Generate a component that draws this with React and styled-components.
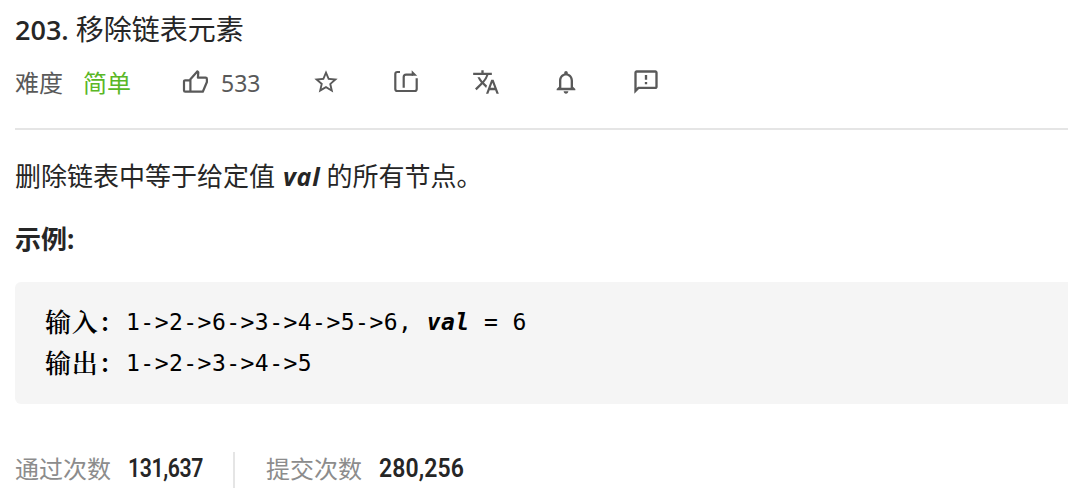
import React from 'react';
import styled, { createGlobalStyle } from 'styled-components';
import { MdStarOutline, MdTranslate, MdNotificationsNone, MdOutlineFeedback } from 'react-icons/md';

const GlobalStyle = createGlobalStyle`
  body {
    margin: 0;
    background: #fff;
    color: #262626;
    font-family: 'Noto Sans', 'Noto Sans CJK SC', sans-serif;
    overflow: hidden;
  }
`;

const Page = styled.main`
  display: flex;
  flex-direction: column;
  height: 504px;
  padding-left: 15px;
  box-sizing: border-box;
  white-space: nowrap;
`;

const Title = styled.h1`
  margin: 9px 0 0;
  height: 40px;
  font-size: 28px;
  line-height: 40px;
  font-weight: 400;
`;

const TitleNumber = styled.span`
  font-family: 'Open Sans', sans-serif;
  font-weight: 600;
  font-size: 27px;
  margin-right: 7px;
`;

const Toolbar = styled.div`
  display: flex;
  align-items: center;
  height: 68px;
  padding-bottom: 24px;
  box-sizing: border-box;
  margin-top: 13px;
  border-bottom: 2px solid #e5e5e5;
  font-size: 24px;
  line-height: 40px;
  color: #595959;
`;

const Difficulty = styled.span`
  margin-left: 20px;
  color: #5ab726;
`;

const Action = styled.button`
  display: flex;
  align-items: center;
  padding: 0;
  border: 0;
  background: none;
  font: inherit;
  color: inherit;
  margin-left: ${(p) => p.$gap}px;

  svg {
    flex: none;
    width: 28px;
    height: 28px;
    margin-top: -3px;
  }
`;

const LikeCount = styled.span`
  width: 40px;
  margin-left: 11px;
  font-size: 23px;
  text-align: left;
`;

const Paragraph = styled.p`
  margin: ${(p) => p.$top}px 0 0;
  height: 40px;
  font-size: 26px;
  line-height: 40px;
  font-weight: ${(p) => (p.$bold ? 700 : 400)};
`;

const Variable = styled.em`
  font-family: 'Open Sans', sans-serif;
  font-weight: 700;
  font-style: italic;
  font-size: 25px;
  letter-spacing: 0.8px;
  margin: 0 6px 0 8px;
`;

const CodeBlock = styled.pre`
  margin: 23px 0 0;
  height: 122px;
  padding: 20px 30px;
  box-sizing: border-box;
  border-radius: 6px 0 0 6px;
  background: #f5f5f5;
  color: #000;
  font-family: 'DejaVu Sans Mono', monospace;
  font-size: 23px;
  letter-spacing: 0.47px;
`;

const CodeLine = styled.div`
  display: flex;
  align-items: center;
  height: 41px;
  line-height: 43px;
`;

const CodeLabel = styled.span`
  width: 81px;
  height: 48px;
  font-family: 'Noto Serif CJK SC', 'Noto Sans CJK SC', serif;
  font-size: 26px;
  font-weight: 600;
  letter-spacing: 0.8px;
`;

const CodeVariable = styled.em`
  font-weight: 700;
`;

const Stats = styled.footer`
  display: flex;
  align-items: center;
  height: 36px;
  margin-top: 48px;
  font-size: 24px;
  line-height: 32px;
  color: #8c8c8c;
`;

const StatLabel = styled.span`
  height: 34px;
`;

const StatValue = styled.strong`
  width: ${(p) => p.$width}px;
  height: 34px;
  margin-left: 17px;
  margin-right: -1px;
  font-family: Roboto, sans-serif;
  font-size: 25px;
  font-weight: 600;
  color: #262626;
  transform: scaleX(${(p) => p.$stretch});
  transform-origin: left center;
  letter-spacing: ${(p) => p.$tracking}px;
`;

const Separator = styled.span`
  width: 2px;
  height: 36px;
  margin: 0 31px;
  background: #e5e5e5;
`;

const LikeIcon = () => (
  <svg viewBox="0 0 28 28" fill="none" stroke="currentColor" strokeWidth="2.2" strokeLinejoin="round">
    <path d="M8.4 12.3H3.2q-1.2 0-1.2 1.2v9q0 1.2 1.2 1.2H20.8L24.9 14V11q0-1.3-1.3-1.3H15.9L16.3 4.4 15.3 3.4 8.4 11.2V23.5" />
  </svg>
);

const ShareIcon = () => (
  <svg viewBox="0 0 28 28" fill="none" stroke="currentColor" strokeWidth="2.2">
    <path d="M8 4H5.3Q3.3 4 3.3 6V21Q3.3 23 5.3 23H22.7Q24.7 23 24.7 21V10.2M11.7 19.7V9Q11.7 6.6 14.1 6.6H21" />
    <path d="M19.7 2.2L25.2 7.7H19.7Z" fill="currentColor" stroke="none" />
  </svg>
);

export default function App() {
  return (
    <>
      <GlobalStyle />
      <Page>
        <Title><TitleNumber>203.</TitleNumber>移除链表元素</Title>
        <Toolbar>
          <span>难度</span>
          <Difficulty>简单</Difficulty>
          <Action $gap={51} aria-label="点赞"><LikeIcon /><LikeCount>533</LikeCount></Action>
          <Action $gap={51} aria-label="收藏"><MdStarOutline /></Action>
          <Action $gap={52} aria-label="分享"><ShareIcon /></Action>
          <Action $gap={52} aria-label="翻译"><MdTranslate /></Action>
          <Action $gap={52} aria-label="通知"><MdNotificationsNone /></Action>
          <Action $gap={52} aria-label="反馈"><MdOutlineFeedback /></Action>
        </Toolbar>
        <Paragraph $top={26}>删除链表中等于给定值<Variable>val</Variable>的所有节点。</Paragraph>
        <Paragraph $top={23} $bold>示例:</Paragraph>
        <CodeBlock>
          <CodeLine><CodeLabel>输入：</CodeLabel><span>{'1->2->6->3->4->5->6, '}<CodeVariable>val</CodeVariable>{' = 6'}</span></CodeLine>
          <CodeLine><CodeLabel>输出：</CodeLabel><span>{'1->2->3->4->5'}</span></CodeLine>
        </CodeBlock>
        <Stats>
          <StatLabel>通过次数</StatLabel><StatValue $width={75} $stretch={0.85} $tracking={-0.5}>131,637</StatValue>
          <Separator />
          <StatLabel>提交次数</StatLabel><StatValue $width={86} $stretch={0.92} $tracking={0.1}>280,256</StatValue>
        </Stats>
      </Page>
    </>
  );
}
